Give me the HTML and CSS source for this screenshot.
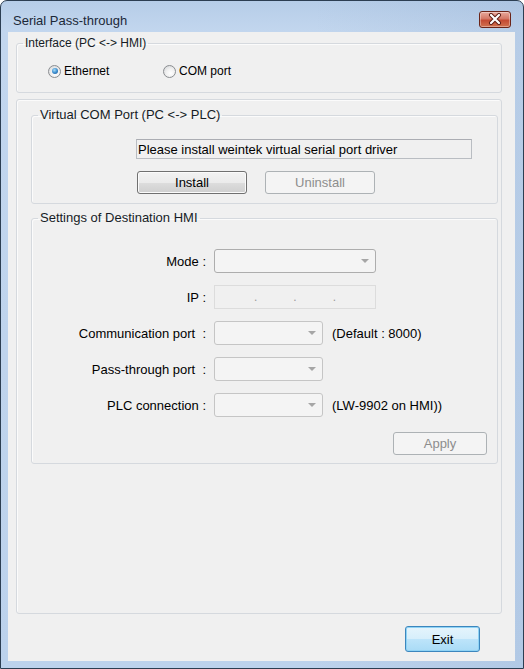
FILE: index.html
```html
<!DOCTYPE html>
<html lang="en">

<head>
    <meta charset="UTF-8">
    <meta name="viewport" content="width=device-width, initial-scale=1.0">
    <title>Serial Pass-through</title>
    <link rel="stylesheet" href="styles.css">
</head>

<body>
    <div class="window">
        <header class="titlebar">
            <span class="title">Serial Pass-through</span>
            <button class="close" title="Close">
                <svg width="16" height="12" viewBox="0 0 16 12">
                    <path d="M4 2 L12 10 M12 2 L4 10" stroke="#5a1a12" stroke-width="4" stroke-linecap="round" fill="none" />
                    <path d="M4 2 L12 10 M12 2 L4 10" stroke="#ffffff" stroke-width="2.2" stroke-linecap="round" fill="none" />
                </svg>
            </button>
        </header>

        <main class="client">
            <fieldset class="group iface">
                <legend>Interface (PC &lt;-&gt; HMI)</legend>
                <div class="radios">
                    <label class="option"><span class="radio checked"></span>Ethernet</label>
                    <label class="option"><span class="radio"></span>COM port</label>
                </div>
            </fieldset>

            <fieldset class="group outer">
                <fieldset class="group vcom">
                    <legend>Virtual COM Port (PC &lt;-&gt; PLC)</legend>
                    <div class="driver-msg">Please install weintek virtual serial port driver</div>
                    <div class="driver-buttons">
                        <button class="btn">Install</button>
                        <button class="btn" disabled>Uninstall</button>
                    </div>
                </fieldset>

                <fieldset class="group dest">
                    <legend>Settings of Destination HMI</legend>
                    <div class="form">
                        <div class="row">
                            <span class="label">Mode :</span>
                            <div class="combo wide dark"></div>
                        </div>
                        <div class="row">
                            <span class="label">IP :</span>
                            <div class="ipfield">
                                <span class="oct first"></span><span class="dot">.</span>
                                <span class="oct"></span><span class="dot">.</span>
                                <span class="oct"></span><span class="dot">.</span>
                            </div>
                        </div>
                        <div class="row">
                            <span class="label">Communication port  :</span>
                            <div class="combo"></div>
                            <span class="note">(Default : 8000)</span>
                        </div>
                        <div class="row">
                            <span class="label">Pass-through port  :</span>
                            <div class="combo"></div>
                        </div>
                        <div class="row">
                            <span class="label">PLC connection :</span>
                            <div class="combo"></div>
                            <span class="note">(LW-9902 on HMI))</span>
                        </div>
                    </div>
                    <div class="apply-row">
                        <button class="btn apply" disabled>Apply</button>
                    </div>
                </fieldset>
            </fieldset>

            <footer class="footer">
                <button class="btn default">Exit</button>
            </footer>
        </main>
    </div>
</body>

</html>
```

FILE: styles.css
```css
body {
    margin: 0;
    padding: 0;
    font-family: "Liberation Sans", Arial, sans-serif;
    font-size: 13px;
    color: #000000;
    background-color: #ffffff;
}

.window {
    width: 524px;
    height: 669px;
    box-sizing: border-box;
    border: 1px solid #2c3e52;
    border-radius: 7px 7px 0 0;
    padding: 0 8px 7px 7px;
    display: flex;
    flex-direction: column;
    background-image: linear-gradient(90deg, rgba(255, 255, 255, 0) 60%, rgba(120, 150, 190, 0.15) 100%),
        linear-gradient(#b6cde8, #c2d6ee 30px, #bcd2ec);
}

.titlebar {
    height: 31px;
    display: flex;
    align-items: center;
    justify-content: space-between;
}

.title {
    font-size: 13px;
    color: #1b2838;
    padding-left: 5px;
    padding-top: 8px;
}

.close {
    width: 32px;
    height: 17px;
    margin-top: 5px;
    margin-right: 4px;
    padding: 0;
    border: 1px solid #6b2418;
    border-radius: 3px;
    background: linear-gradient(#e8a99c 0%, #d47866 45%, #c44a33 55%, #d0714f 100%);
    box-shadow: inset 0 0 0 1px rgba(255, 255, 255, 0.35);
    display: flex;
    align-items: center;
    justify-content: center;
}

.client {
    flex: 1;
    background-color: #f0f0f0;
    padding: 4px 13px 0 8px;
    display: flex;
    flex-direction: column;
}

.group {
    margin: 0;
    padding: 0;
    border: 1px solid #d5d9de;
    border-radius: 3px;
    box-shadow: inset 1px 1px 0 #fbfbfb;
    min-width: 0;
}

.group legend {
    margin-left: 6px;
    padding: 0 2px;
    line-height: 14px;
    color: #161c26;
}

.iface {
    padding-bottom: 14px;
    font-size: 12px;
}

.radios {
    margin-top: 14px;
    padding-left: 31px;
    height: 14px;
    display: flex;
    align-items: center;
}

.option {
    display: flex;
    align-items: center;
    gap: 3px;
    width: 115px;
}

.radio {
    width: 11px;
    height: 11px;
    border: 1px solid #8a8d90;
    border-radius: 50%;
    background: radial-gradient(circle at 60% 65%, #ffffff 0%, #f0f0f0 45%, #cfd1d4 100%);
    display: flex;
    align-items: center;
    justify-content: center;
}

.radio.checked::after {
    content: "";
    width: 6px;
    height: 6px;
    border-radius: 50%;
    background: radial-gradient(circle at 40% 35%, #a8ddf7 0%, #3e8fd0 50%, #1a4f8c 100%);
}

.outer {
    flex: 1;
    margin-top: 6px;
    padding: 8px 3px 0 14px;
}

.vcom {
    padding-bottom: 9px;
}

.driver-msg {
    margin: 17px 0 0 104px;
    width: 336px;
    height: 20px;
    box-sizing: border-box;
    border: 1px solid #b9bdc2;
    border-top-color: #abadb3;
    padding-left: 1px;
    display: flex;
    align-items: center;
    background-color: #f0f0f0;
}

.driver-buttons {
    margin: 12px 0 0 105px;
    display: flex;
    gap: 18px;
}

.btn {
    width: 110px;
    height: 23px;
    padding: 0;
    font-family: "Liberation Sans", Arial, sans-serif;
    font-size: 13px;
    color: #000000;
    border: 1px solid #707070;
    border-radius: 3px;
    background: linear-gradient(#f2f2f2 0%, #ebebeb 50%, #dddddd 50%, #cfcfcf 100%);
    box-shadow: inset 0 0 0 1px #fbfbfb;
}

.btn:disabled {
    color: #8d8d8d;
    border-color: #adb2b5;
    background: #f4f4f4;
    box-shadow: none;
}

.dest {
    margin-top: 7px;
    padding-bottom: 8px;
}

.form {
    margin-top: 24px;
    display: flex;
    flex-direction: column;
    gap: 12px;
}

.row {
    display: flex;
    align-items: center;
    height: 24px;
}

.label {
    width: 174px;
    text-align: right;
    white-space: pre;
    margin-right: 8px;
}

.combo {
    width: 109px;
    height: 24px;
    box-sizing: border-box;
    border: 1px solid #c5c5c5;
    border-radius: 3px;
    background-color: #f4f4f4;
    display: flex;
    align-items: center;
    justify-content: flex-end;
    padding-right: 6px;
}

.combo::after {
    content: "";
    border-left: 4px solid transparent;
    border-right: 4px solid transparent;
    border-top: 4px solid #a6a6a6;
}

.combo.wide {
    width: 162px;
}

.combo.dark {
    border-color: #adadad;
}

.note {
    margin-left: 9px;
}

.ipfield {
    width: 162px;
    height: 24px;
    box-sizing: border-box;
    border: 1px solid #dcdcdc;
    background-color: #f0f0f0;
    display: flex;
    align-items: center;
    color: #9a9a9a;
    font-size: 12px;
}

.oct {
    width: 36px;
}

.oct.first {
    width: 39px;
}

.apply-row {
    margin-top: 15px;
    display: flex;
    justify-content: flex-end;
    padding-right: 10px;
}

.apply {
    width: 94px;
}

.footer {
    display: flex;
    justify-content: flex-end;
    padding: 12px 22px 9px 0;
}

.btn.default {
    width: 75px;
    height: 26px;
    border: 1px solid #3c86bd;
    background: linear-gradient(#e5f4fc 0%, #d6eefb 50%, #bde4fa 50%, #a9dbf6 100%);
    box-shadow: inset 0 0 0 1px #8fd3f5;
}
```
